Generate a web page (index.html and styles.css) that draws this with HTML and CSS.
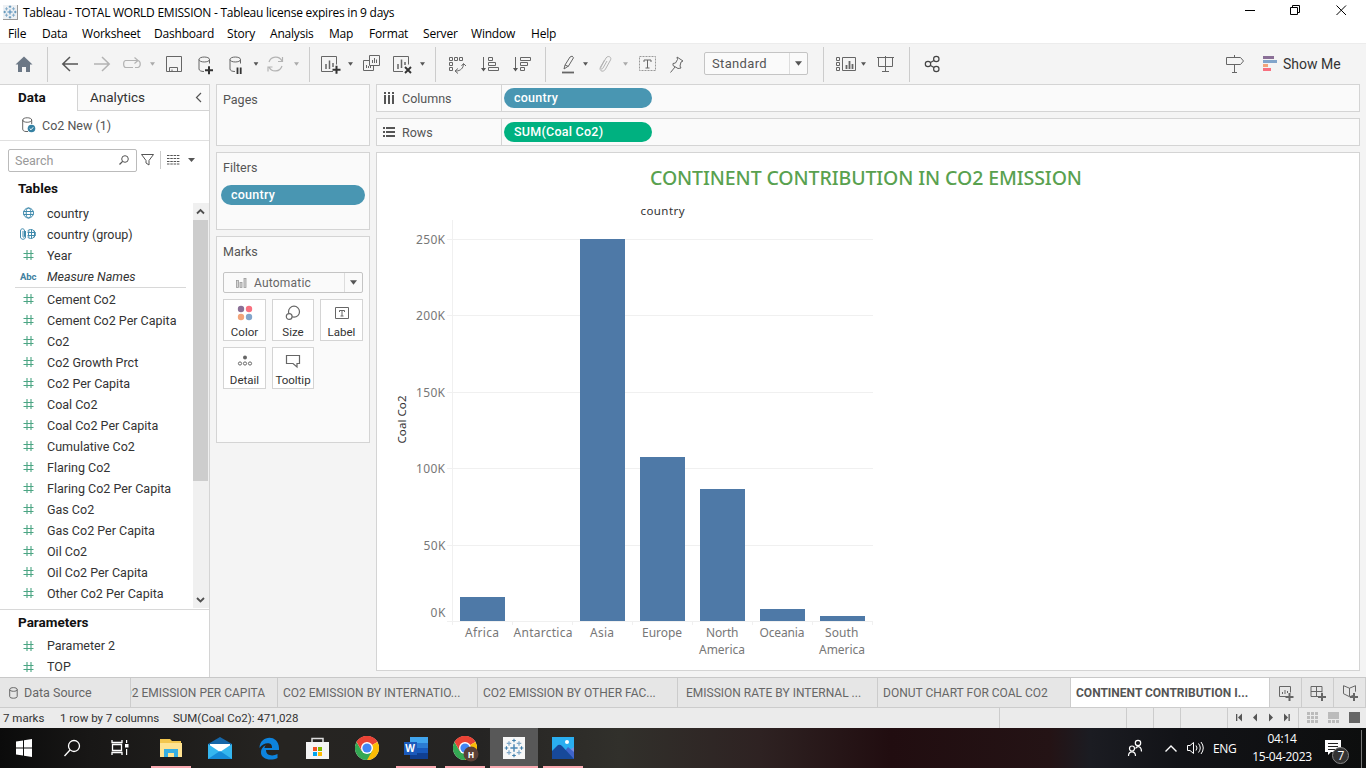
FILE: index.html
```html
<!DOCTYPE html>
<html lang="en">
<head>
<meta charset="utf-8">
<title>Tableau - TOTAL WORLD EMISSION</title>
<link rel="stylesheet" href="styles.css">
</head>
<body>
<svg class="defs" width="0" height="0" aria-hidden="true">
  <defs>
    <symbol id="hash" viewBox="0 0 12 12"><path d="M4.5 1v10M8.5 1v10M1 4.5h10M1 8.5h10" fill="none" stroke="#4ba583" stroke-width="1.1"/></symbol>
    <symbol id="spark" viewBox="0 0 22 22">
      <g fill="none" stroke-width="1.6">
        <path d="M11 7v8M7 11h8" stroke="#4b87b5" stroke-width="1.6"/>
        <path d="M11 .7v4M9 2.7h4M11 17.300v4M9 19.300h4M2.700 9v4M.7 11h4M19.300 9v4M17.300 11h4" stroke="#3f7fac" stroke-width="1.200"/>
        <path d="M5.500 3.500v5M3 6h5M16.500 3.500v5M14 6h5M5.500 13.500v5M3 16h5M16.500 13.500v5M14 16h5" stroke="#7fa8c8" stroke-width="1.400"/>
      </g>
    </symbol>
    <symbol id="cyl" viewBox="0 0 14 18"><path d="M1 3.500v9.500c0 1.500 2 2.500 5 2.500M11.500 3.500v4M1 3.500c0-3.300 10.500-3.300 10.500 0s-10.500 3.300-10.500 0z" fill="none" stroke="#666"/></symbol>
    <symbol id="caret" viewBox="0 0 6 4"><path d="M0 0h6L3 4z"/></symbol>
    <symbol id="chrome" viewBox="0 0 24 24">
      <circle cx="12" cy="12" r="12" fill="#fff"/>
      <path d="M12 12L1.600 6A12 12 0 0 1 22.400 6z" fill="#ea4335"/>
      <path d="M12 12L22.400 6A12 12 0 0 1 12 24z" fill="#fbbc05"/>
      <path d="M12 12v0L6.800 15 1.600 6A12 12 0 0 0 12 24l5.200-9z" fill="#34a853"/>
      <path d="M12 6h10.400A12 12 0 0 0 1.600 6l5.200 9z" fill="#ea4335"/>
      <circle cx="12" cy="12" r="6" fill="#fff"/><circle cx="12" cy="12" r="4.600" fill="#4285f4"/>
    </symbol>
  </defs>
</svg>

<header class="titlebar">
  <span class="app-icon"><svg width="14" height="14"><use href="#spark"/></svg></span>
  <span class="app-title">Tableau - TOTAL WORLD EMISSION - Tableau license expires in 9 days</span>
  <svg class="window-buttons" width="121" height="24" viewBox="1240 0 121 24" fill="none" stroke="#000"><path d="M1245 10.500h10M1290.500 7.500h7v7h-7zM1292.500 7v-1.500h7v7h-2M1336.500 5.500l9.500 9.500M1346 5.500l-9.500 9.500"/></svg>
</header>

<nav class="menu">
  <span>File</span><span>Data</span><span>Worksheet</span><span>Dashboard</span><span>Story</span><span>Analysis</span><span>Map</span><span>Format</span><span>Server</span><span>Window</span><span>Help</span>
</nav>

<div class="toolbar">
  <svg width="48" height="41" viewBox="0 43 48 41"><path d="M24 56.500l8.500 8h-2.500v7.500h-4v-5h-4v5h-4v-7.500h-2.500z" fill="#6b7785"/><path d="M47.500 47v35" stroke="#ccc"/></svg>
  <svg width="110" height="41" viewBox="48 43 110 41" fill="none" stroke="#555" stroke-width="1.500"><path d="M62.500 64h15.500M70 57l-7.200 7 7.200 7"/><g stroke="#b3b3b3"><path d="M94 64h15.500M102 57l7.200 7-7.200 7"/><path d="M133 67.500h-7.500c-2.500-.5-2.500-6.500 0-7h12M134.500 57.500l3.500 3-3.500 3M138 60.500c3 1 3 6 0 7h-3" stroke-width="1.200"/></g><use href="#caret" x="150" y="62" width="5" height="4" fill="#aaa" stroke="none"/></svg>
  <svg width="104" height="41" viewBox="158 43 104 41" fill="none" stroke="#666"><path d="M166.500 56.500h15v15h-15zM169.500 71.500v-4h8v4M172 71.500v-2"/><use href="#cyl" x="198" y="56" width="14" height="18"/><path d="M205 70.200h8M209 66.200v8" stroke="#333" stroke-width="2"/><use href="#cyl" x="229" y="56" width="14" height="18"/><path d="M237.500 67.500v6.500M240.700 67.500v6.500" stroke="#333" stroke-width="1.800"/><use href="#caret" x="253.500" y="62" width="5" height="4" fill="#555" stroke="none"/></svg>
  <svg width="48" height="41" viewBox="262 43 48 41" fill="none" stroke="#b3b3b3" stroke-width="1.200"><path d="M269 62a7 7 0 0 1 13-1M282 66a7 7 0 0 1-13 1M282.500 57v4.500h-4.500M268 71.500V67h4.500"/><use href="#caret" x="294" y="62" width="5" height="4" fill="#aaa" stroke="none"/><path d="M309.500 47v35" stroke="#ccc" stroke-width="1"/></svg>
  <svg width="126" height="41" viewBox="310 43 126 41" fill="none" stroke="#666"><path d="M333 71.500h-11.500v-15h15v8M388.500 47" /><path d="M326 69v-5M329.500 69v-8.500M333 67v-4" stroke-width="1.500"/><path d="M332.500 69.800h8M336.500 65.800v8" stroke="#333" stroke-width="2"/><use href="#caret" x="348" y="62" width="5" height="4" fill="#555" stroke="none"/><path d="M369.500 55.500h10v10h-10zM369 60.500h-5.500v10h10v-5M372.500 63v-3M374.500 63v-5M376.500 63v-3.500M366.500 68v-3M368.500 68v-2M370.500 68v-2"/><path d="M403 71.500h-9.500v-15h15v8"/><path d="M398 69v-5M401.500 68v-8.500M405 65v-3" stroke-width="1.500"/><path d="M405 67l6 6M411 67l-6 6" stroke="#333" stroke-width="1.900"/><use href="#caret" x="420" y="62" width="5" height="4" fill="#555" stroke="none"/><path d="M435.500 47v35" stroke="#ccc"/></svg>
  <svg width="110" height="41" viewBox="436 43 110 41" fill="none" stroke="#666"><path d="M449.500 57.500h3v3h-3zM454.500 57.500h3v3h-3zM459.500 57.500h3v3h-3zM449.500 62.500h3v3h-3zM449.500 67.500h3v3h-3z"/><path d="M463.500 64c0 4-3 7-7.500 7M461.500 66l2-2.500 2.500 2.500M458 68.500l-3 2.500 3 2.500"/><path d="M483.500 57v12.500M488.500 57.500h4v3h-4zM488.500 62.500h7v3h-7zM488.500 67.500h10v3h-10zM515.500 57v12.500M520.500 57.500h10v3h-10zM520.500 62.500h7v3h-7zM520.500 67.500h4v3h-4z"/><path d="M481 68h5l-2.500 3.500zM513 68h5l-2.500 3.500z" fill="#555" stroke="none"/><path d="M545.500 47v35" stroke="#ccc"/></svg>
  <svg width="156" height="41" viewBox="546 43 156 41" fill="none" stroke="#666"><path d="M564 69l1-4 5-8q2.500-2.200 3.500.8L568.500 66zM565 65l3.500 1.500"/><path d="M562 72.500h12" stroke-width="1.800"/><use href="#caret" x="583" y="62" width="5" height="4" fill="#555" stroke="none"/><path d="M607 61l-4 7c-1 2-3 1-2-1l5-9c2-3 6-1 4.500 2l-5 9c-2 4-7 2-5-2l4-7" stroke="#b3b3b3"/><use href="#caret" x="623" y="62" width="5" height="4" fill="#aaa" stroke="none"/><path d="M639.500 56.500h16v14h-16z" stroke="#999" stroke-dasharray="2 1"/><path d="M644 62v-2h7v2M647.500 60v8M645.500 68h4"/><path d="M677 57l6 4-2 1-1 4 1 2-3 .5-5-3 0-2 2.500-.5 2-3.500zM675 67l-4.500 5.500"/></svg>
  <div class="fit"><span>Standard</span><i><svg width="7" height="5"><use href="#caret" fill="#555"/></svg></i></div>
  <svg width="146" height="41" viewBox="808 43 146 41" fill="none" stroke="#666"><path d="M823.500 47v35M909.500 47v35" stroke="#ccc"/><path d="M836.500 57.500h3v3h-3zM836.500 62.500h3v3h-3zM836.500 67.500h3v3h-3zM842.500 57.500h13v13h-13z"/><path d="M846.500 69v-4M849.500 69v-8M852.500 69v-5" stroke-width="1.800"/><use href="#caret" x="861" y="62" width="5" height="4" fill="#555" stroke="none"/><path d="M877 57.500h17M878.500 57.500v9h14v-9M885.500 56v15.500M882 71.500h7"/><g stroke="#444" stroke-width="1.200"><circle cx="928" cy="64" r="2.700"/><circle cx="936.300" cy="59" r="2.700"/><circle cx="936.300" cy="69" r="2.700"/><path d="M930.500 62.500l3.500-2M930.500 65.500l3.500 2"/></g></svg>
  <svg class="guide" width="63" height="41" viewBox="1220 43 63 41" fill="none" stroke="#666"><path d="M1226.500 57.500h14l3 3.500-3 3.500h-14zM1234.500 55v2.500M1234.500 64.500v8M1232 72.500h5"/><g stroke="none"><path d="M1263 56h11v3h-11z" fill="#8a6f96"/><path d="M1263 60h14v3h-14z" fill="#82a5cb"/><path d="M1263 64h5v3h-5z" fill="#f2a47a"/><path d="M1263 68h8v3h-8z" fill="#f8707f"/></g></svg>
  <span class="showme">Show Me</span>
</div>

<div class="workspace">
  <aside class="sidebar">
    <div class="side-tabs"><b>Data</b><span>Analytics<svg width="7" height="11" viewBox="0 0 7 11"><path d="M6 1L1.500 5.500 6 10" fill="none" stroke="#555" stroke-width="1.200"/></svg></span></div>
    <div class="source"><svg width="14" height="16" viewBox="0 0 14 16"><path d="M6 14.500H4C2 14.500.7 13.500.7 12V3M9.700 3v4M.7 3c0-3 9-3 9 0s-9 3-9 0z" fill="none" stroke="#666"/><circle cx="9.500" cy="11.500" r="3.800" fill="#3581a3"/><path d="M7.700 11.500l1.300 1.300 2.200-2.500" fill="none" stroke="#fff"/></svg><span>Co2 New (1)</span></div>
    <div class="search-row">
      <div class="search"><span>Search</span><svg width="10" height="10" viewBox="0 0 10 10" fill="none" stroke="#555"><circle cx="6" cy="4" r="3.300"/><path d="M3.600 6.400L.5 9.500" stroke-width="1.300"/></svg></div>
      <svg width="72" height="23" viewBox="138 149 72 23" fill="none" stroke="#555"><path d="M142.500 154.500h12l-4.500 6v4.500l-3 -2v-2.500z"/><path d="M161.500 151v18" stroke="#ccc"/><path d="M168 155.500h12.500M168 158.500h12.500M168 161.500h12.500M168 164h12.500" stroke-dasharray="2.500 .8"/><path d="M189 158h7l-3.500 4z" fill="#555" stroke="none"/></svg>
    </div>
    <h2>Tables</h2>
    <div class="list-wrap">
      <ul class="fields">
        <li><svg width="12" height="12" viewBox="0 0 12 12" fill="none" stroke="#3f8aac"><circle cx="6" cy="6" r="5"/><ellipse cx="6" cy="6" rx="2.300" ry="5"/><path d="M1 4.500h10M1 7.500h10"/></svg><span>country</span></li>
        <li><svg width="17" height="12" viewBox="0 0 17 12" fill="none" stroke="#3f8aac"><path d="M3 3v5.500c0 1 1.500 1 1.500 0V3c0-3-4-3-4 0v6c0 3 5 3 5 0V3"/><path d="M7.500 3a4.500 4.500 0 1 1 0 6M11.500 1.500v9M9 2.500q-1.200 3.500 0 7M14 2.500q1.200 3.500 0 7M7.500 4.500h8M7.500 7.500h8"/></svg><span>country (group)</span></li>
        <li><svg width="12" height="12"><use href="#hash"/></svg><span>Year</span></li>
        <li class="last-dim"><b>Abc</b><em>Measure Names</em></li>
        <li><svg width="12" height="12"><use href="#hash"/></svg><span>Cement Co2</span></li>
        <li><svg width="12" height="12"><use href="#hash"/></svg><span>Cement Co2 Per Capita</span></li>
        <li><svg width="12" height="12"><use href="#hash"/></svg><span>Co2</span></li>
        <li><svg width="12" height="12"><use href="#hash"/></svg><span>Co2 Growth Prct</span></li>
        <li><svg width="12" height="12"><use href="#hash"/></svg><span>Co2 Per Capita</span></li>
        <li><svg width="12" height="12"><use href="#hash"/></svg><span>Coal Co2</span></li>
        <li><svg width="12" height="12"><use href="#hash"/></svg><span>Coal Co2 Per Capita</span></li>
        <li><svg width="12" height="12"><use href="#hash"/></svg><span>Cumulative Co2</span></li>
        <li><svg width="12" height="12"><use href="#hash"/></svg><span>Flaring Co2</span></li>
        <li><svg width="12" height="12"><use href="#hash"/></svg><span>Flaring Co2 Per Capita</span></li>
        <li><svg width="12" height="12"><use href="#hash"/></svg><span>Gas Co2</span></li>
        <li><svg width="12" height="12"><use href="#hash"/></svg><span>Gas Co2 Per Capita</span></li>
        <li><svg width="12" height="12"><use href="#hash"/></svg><span>Oil Co2</span></li>
        <li><svg width="12" height="12"><use href="#hash"/></svg><span>Oil Co2 Per Capita</span></li>
        <li><svg width="12" height="12"><use href="#hash"/></svg><span>Other Co2 Per Capita</span></li>
      </ul>
      <div class="scroll">
        <svg width="15" height="17" viewBox="0 0 15 17"><path d="M4 10.500l3.500-3.500 3.500 3.500" fill="none" stroke="#505050" stroke-width="1.800"/></svg>
        <div class="thumb"></div>
        <svg width="15" height="17" viewBox="0 0 15 17"><path d="M4 7l3.500 3.500L11 7" fill="none" stroke="#505050" stroke-width="1.800"/></svg>
      </div>
    </div>
    <div class="params">
      <h2>Parameters</h2>
      <ul class="fields">
        <li><svg width="12" height="12"><use href="#hash"/></svg><span>Parameter 2</span></li>
        <li><svg width="12" height="12"><use href="#hash"/></svg><span>TOP</span></li>
      </ul>
    </div>
  </aside>

  <section class="cards">
    <div class="card pages"><h3>Pages</h3></div>
    <div class="card filters"><h3>Filters</h3><div class="pill">country</div></div>
    <div class="card marks">
      <h3>Marks</h3>
      <div class="mark-type"><svg width="11" height="10" viewBox="0 0 11 10" fill="#d6d6d6" stroke="#999" stroke-width=".8"><rect x=".5" y="2.500" width="2" height="7"/><rect x="4" y="4.500" width="2" height="5"/><rect x="8" y=".5" width="2" height="9"/></svg><span>Automatic</span><i><svg width="7" height="5"><use href="#caret" fill="#555"/></svg></i></div>
      <div class="mark-grid">
        <div><svg width="16" height="16" viewBox="0 0 16 16"><circle cx="4" cy="4" r="3.200" fill="#8a6f96"/><circle cx="12" cy="4" r="3.200" fill="#f8707f"/><circle cx="4" cy="12" r="3.200" fill="#f2a47a"/><circle cx="12" cy="12" r="3.200" fill="#82a5cb"/></svg><span>Color</span></div>
        <div><svg width="16" height="16" viewBox="0 0 16 16" fill="none" stroke="#666" stroke-width="1.200"><circle cx="9" cy="6.700" r="5.500"/><circle cx="4.200" cy="11.500" r="2.900" fill="#fff"/></svg><span>Size</span></div>
        <div><svg width="16" height="16" viewBox="0 0 16 16" fill="none" stroke="#666"><path d="M1.500 2.500h13v11h-13zM5.500 7V5.500h5V7M8 5.500v5.500M6.500 11h3"/></svg><span>Label</span></div>
        <div><svg width="16" height="16" viewBox="0 0 16 16" fill="none" stroke="#666"><circle cx="8" cy="4.500" r="2" fill="#666" stroke="none"/><circle cx="3" cy="10.500" r="1.600"/><circle cx="8" cy="10.500" r="1.600"/><circle cx="13" cy="10.500" r="1.600"/></svg><span>Detail</span></div>
        <div><svg width="16" height="16" viewBox="0 0 16 16" fill="none" stroke="#666" stroke-width="1.200"><path d="M1.500 2.500h13v8h-2.500v3.500l-4-3.500H1.500z"/></svg><span>Tooltip</span></div>
      </div>
    </div>
  </section>

  <main class="view">
    <div class="shelf"><div class="shelf-name"><svg width="12" height="12" viewBox="0 0 12 12" fill="#555"><path d="M1 0h2v2H1zM5 0h2v2H5zM9 0h2v2H9zM1 3h2v9H1zM5 3h2v9H5zM9 3h2v9H9z"/></svg><span>Columns</span></div><div class="pill">country</div></div>
    <div class="shelf"><div class="shelf-name"><svg width="12" height="12" viewBox="0 0 12 12" fill="#555"><path d="M0 1h2v2H0zM0 5h2v2H0zM0 9h2v2H0zM3 1h9v2H3zM3 5h9v2H3zM3 9h9v2H3z"/></svg><span>Rows</span></div><div class="pill green">SUM(Coal Co2)</div></div>
    <div class="sheet">
      <svg class="chart" width="982" height="517" viewBox="377 153 982 517">
        <text class="sheet-title" x="650" y="184.500" textLength="432">CONTINENT CONTRIBUTION IN CO2 EMISSION</text>
        <text class="axis-title" x="640.500" y="215" textLength="44">country</text>
        <text class="axis-title" transform="translate(406 443.500) rotate(-90)" textLength="48">Coal Co2</text>
        <path class="grid" d="M447 239.500h426M447 315.500h426M447 392.500h426M447 468.500h426M447 545.500h426M447 621.500h426M452.500 220v405M512.500 622v3M572.500 622v3M632.500 622v3M692.500 622v3M752.500 622v3M812.500 622v3M872.500 622v3"/>
        <g class="bars"><path d="M460 597h45v24h-45zM580 239h45v382h-45zM640 457h45v164h-45zM700 489h45v132h-45zM760 609h45v12h-45zM820 616h45v5h-45z"/></g>
        <g class="ticks">
          <text x="416" y="244" textLength="29">250K</text><text x="416" y="320" textLength="29">200K</text><text x="416" y="397" textLength="29">150K</text><text x="416" y="473" textLength="29">100K</text><text x="423.500" y="550" textLength="22">50K</text><text x="430.500" y="617" textLength="15">0K</text>
          <text x="465" y="637" textLength="34">Africa</text><text x="513.500" y="637" textLength="59">Antarctica</text><text x="590" y="637" textLength="24">Asia</text><text x="642" y="637" textLength="40">Europe</text><text x="706" y="637" textLength="32.500">North</text><text x="699" y="654" textLength="46">America</text><text x="759.500" y="637" textLength="45">Oceania</text><text x="825" y="637" textLength="33.500">South</text><text x="819" y="654" textLength="46">America</text>
        </g>
      </svg>
    </div>
  </main>
</div>

<div class="tabs">
  <div class="tab t-source"><svg width="9" height="12" viewBox="0 0 9 12" fill="none" stroke="#666"><path d="M.7 2.500v7c0 2.300 7.500 2.300 7.500 0v-7M.7 2.500c0-2.500 7.500-2.500 7.500 0s-7.500 2.300-7.500 0z"/></svg><span>Data Source</span></div>
  <div class="tab t-first"><span>CO2 EMISSION PER CAPITA</span></div>
  <div class="tab t-mid"><span>CO2 EMISSION BY INTERNATIO...</span></div>
  <div class="tab t-mid"><span>CO2 EMISSION BY OTHER FAC...</span></div>
  <div class="tab t-mid t-rate"><span>EMISSION RATE BY INTERNAL ...</span></div>
  <div class="tab t-donut"><span>DONUT CHART FOR COAL CO2</span></div>
  <div class="tab t-active"><span>CONTINENT CONTRIBUTION I...</span></div>
  <svg width="96" height="29" viewBox="1270 678 96 29" fill="none" stroke="#666"><path d="M1301.500 678v29M1333.500 678v29M1365.500 678v29" stroke="#ccc"/><path d="M1288 696.500h-8.500v-10h11v6M1282.500 694v-2M1285 694v-4M1287.500 693v-2M1320 696.500h-9v-10h11v6M1316.500 686.500v10M1311 691.500h11M1353 695.500l-3.500 1.200-6-3v-8l6 2.500 6-2.500v6M1349.500 688v8.500"/><path d="M1285.500 697h8M1289.500 693v8M1318 697h8M1322 693v8M1350 697h8M1354 693v8" stroke-width="2"/></svg>
</div>

<footer class="status">
  <span class="s-marks">7 marks</span><span class="s-rows">1 row by 7 columns</span><span class="s-sum">SUM(Coal Co2): 471,028</span>
  <svg width="376" height="20" viewBox="990 708 376 20" fill="#555"><path d="M999.500 708v20M1126.500 708v20M1153.500 708v20M1180.500 708v20M1227.500 708v20M1298.500 708v20" stroke="#ccc"/><path d="M1236 714h1.300v7H1236zM1242 713.500v8l-4-4zM1257 713.500v8l-4-4zM1269 713.500v8l4-4zM1284 713.500v8l4-4zM1288.500 714h1.300v7h-1.300z"/><path d="M1307 712h3v3h-3zM1311 712h3v3h-3zM1315 712h3v3h-3zM1307 716h3v3h-3zM1311 716h3v3h-3zM1315 716h3v3h-3zM1307 720h3v3h-3zM1311 720h3v3h-3zM1315 720h3v3h-3zM1328 712h11v7h-11zM1328 720h3v3h-3zM1332 720h3v3h-3zM1336 720h3v3h-3z" fill="#bbb"/><path d="M1349 712h11v11h-11z" fill="#666"/></svg>
</footer>

<div class="taskbar">
  <svg width="146" height="40" viewBox="0 728 146 40"><path d="M16 741.500l7-1v7h-7zM24 740.300l8-1.300v8.500h-8zM16 748.500h7v7l-7-1zM24 748.500h8v8.500l-8-1.300z" fill="#fff"/><g fill="none" stroke="#fff" stroke-width="1.300"><circle cx="74" cy="746" r="5.500"/><path d="M70 750l-5.500 6"/><path d="M112 740v2.500h10V740M112 755v-2.500h10v2.500M112.500 744.500h9v6h-9z"/></g><path d="M126 740h1.200v3H126zM125 744h3.500v3.500H125zM126 749h1.200v6H126z" fill="#fff"/></svg>
  <svg width="196" height="40" viewBox="146 728 196 40"><path d="M160 739h10l2 2h9v16h-21z" fill="#f3c64e"/><path d="M160 743h22v14h-22z" fill="#ffe391"/><path d="M164 757v-8h14v8h-4v-4h-6v4z" fill="#36aee2"/><path d="M151 766h40v2h-40z" fill="#f9a9b0"/>
    <path d="M208 744l12-7 12 7v15h-24z" fill="#1566a8"/><path d="M210 744h20v9h-20z" fill="#fff"/><path d="M208 744l12 8 12-8v15h-24z" fill="#35b6ef"/><path d="M208 759l12-8 12 8z" fill="#168bd8"/>
    <path d="M259.500 748c0-13 19-14.500 19.500 0v2h-13c0 6 7 6.500 11.500 4v4c-7 3.500-17 1-16.500-6 .3-4 3-6 5-7-1.500 1.500-1.500 2.500-1.500 3h7.500c.5-7-9-5.500-12.500 0z" fill="#0d83dd"/>
    <path d="M312 744v-5.500h11v5.500" fill="none" stroke="#ddd" stroke-width="1.500"/><path d="M306 742h23v17h-23z" fill="#f4f4f4"/><path d="M313 747h4v4h-4z" fill="#f25022"/><path d="M318 747h4v4h-4z" fill="#7fba00"/><path d="M313 752h4v4h-4z" fill="#00a4ef"/><path d="M318 752h4v4h-4z" fill="#ffb900"/></svg>
  <svg width="258" height="40" viewBox="342 728 258 40"><use href="#chrome" x="355" y="736" width="24" height="24"/>
    <path d="M410 737h18v6h-18z" fill="#41a5ee"/><path d="M410 743h18v5h-18z" fill="#2b7cd3"/><path d="M410 748h18v5h-18z" fill="#185abd"/><path d="M410 753h18v6h-18z" fill="#103f91"/><path d="M404 742h13v13h-13z" fill="#1b5abc"/><text x="405.300" y="752" class="badge" textLength="10">W</text>
    <use href="#chrome" x="453" y="736" width="24" height="24"/><circle cx="471" cy="754" r="7.500" fill="#5c4038"/><text x="467.800" y="757.500" class="badge small">H</text>
    <path d="M490 728h48v40h-48z" fill="#585858"/><path d="M503 737h22v22h-22z" fill="#f7f7f7"/><use href="#spark" x="504" y="738" width="20" height="20"/>
    <path d="M552 737h22v22h-22z" fill="#2aaef0"/><path d="M574 747l-6 4 6 8z" fill="#7a8fe0"/><path d="M560 757l8-10 6 5v7h-14z" fill="#3f64c9"/><path d="M552 751l6-6q2-1 4 1l12 13h-22z" fill="#17499a"/><circle cx="567" cy="742" r="2" fill="#fff"/>
    <path d="M396 766h40v2h-40zM445 766h40v2h-40zM490 766h48v2h-48zM543 766h40v2h-40z" fill="#f9a9b0"/></svg>
  <svg class="tray" width="90" height="40" viewBox="1120 728 90 40" fill="none" stroke="#fff" stroke-width="1.200"><circle cx="1132" cy="748.500" r="2.500"/><path d="M1128.500 756c0-5.500 7-5.500 7 0"/><circle cx="1138" cy="743" r="2.700"/><path d="M1135.500 748.500c2-3.500 6-2 6 3"/><path d="M1165.500 751.500l5.500-5.500 5.500 5.500" stroke-width="1.400"/><path d="M1187.500 745.500h2.500l3.500-3v11l-3.500-3h-2.500zM1196 745.500q2 2.500 0 5M1198.500 743.500q3.500 4.500 0 9M1201 742q4.500 6 0 12" stroke-width="1"/></svg>
  <span class="lang">ENG</span>
  <div class="clock"><span>04:14</span><span>15-04-2023</span></div>
  <svg width="48" height="40" viewBox="1318 728 48 40"><path d="M1325 740h16v12h-10l-3 3v-3h-3z" fill="#fff"/><path d="M1328 743.500h10M1328 746.500h10M1328 749.500h7" stroke="#222"/><circle cx="1340.500" cy="755.500" r="8" fill="#333" stroke="#888"/><text x="1337.500" y="760" class="badge count">7</text><path d="M1361.500 730v38" stroke="#777"/></svg>
</div>
</body>
</html>
```
FILE: styles.css
```css
* { box-sizing: border-box; }
body { margin: 0; width: 1366px; height: 768px; overflow: hidden; background: #f4f4f4; font-family: Roboto, "Liberation Sans", sans-serif; font-size: 12.5px; color: #333; display: flex; flex-direction: column; white-space: nowrap; }
.defs { position: absolute; }
svg { display: block; flex: none; }
h2, h3, ul { margin: 0; padding: 0; font-weight: 400; }
ul { list-style: none; }

.titlebar { height: 24px; background: #fff; display: flex; align-items: center; padding-left: 3px; font-family: "Open Sans", sans-serif; font-size: 12px; color: #000; }
.app-icon { width: 15px; height: 15px; background: #eef1f4; border-right: 1px solid #999; border-bottom: 1px solid #999; margin-right: 5px; }
.app-title { letter-spacing: -.25px; }
.window-buttons { margin-left: auto; margin-right: 5px; }

.menu { height: 19px; background: #fff; display: grid; grid-template-columns: 34px 40px 72px 73px 43px 59px 40px 54px 48px 60px 60px; padding-left: 8px; align-items: center; font-family: "Open Sans", sans-serif; font-size: 12px; letter-spacing: -.2px; color: #000; }

.toolbar { height: 41px; display: flex; align-items: center; border-top: 1px solid #ececec; }
.toolbar > svg { margin-top: -1px; }
.fit { width: 104px; height: 23px; margin: 0 0 1px; border: 1px solid #c4c4c4; border-radius: 2px; background: #fafafa; display: flex; align-items: center; justify-content: space-between; padding-left: 7px; font-size: 13px; letter-spacing: .35px; color: #555; margin-left: 2px; }
.fit i, .mark-type i { width: 18px; height: 100%; border-left: 1px solid #ddd; display: flex; align-items: center; justify-content: center; }
.guide { margin-left: auto; }
.showme { width: 83px; font-size: 14px; color: #333; }

.workspace { height: 593px; display: flex; }
.sidebar { width: 210px; background: #fff; border-right: 1px solid #d4d4d4; display: flex; flex-direction: column; }
.side-tabs { height: 27px; display: flex; font-size: 14px; border-top: 1px solid #d4d4d4; }
.side-tabs b { width: 77px; padding: 4px 0 0 18px; color: #111; font-weight: 700; font-size: 13.500px; }
.side-tabs span { flex: 1; border-left: 1px solid #d4d4d4; border-bottom: 1px solid #d4d4d4; background: #fafafa; padding: 0 7px 0 12px; display: flex; justify-content: space-between; align-items: center; font-size: 13.500px; }
.source { height: 30px; border-bottom: 1px solid #e0e0e0; display: flex; align-items: center; padding-left: 22px; gap: 6px; color: #555; }
.search-row { display: flex; padding: 8px 0 0 8px; height: 31px; }
.search { width: 130px; height: 23px; border: 1px solid #bbb; border-radius: 2px; display: flex; align-items: center; justify-content: space-between; padding: 0 7px 0 6px; color: #999; }
h2 { height: 31px; line-height: 32px; padding-left: 18px; font-size: 13.500px; font-weight: 700; color: #111; }
.list-wrap { display: flex; height: 406px; justify-content: space-between; }
.fields { width: 193px; }
.fields li { height: 21px; display: flex; align-items: center; }
.fields li > :first-child { width: 17px; margin: 0 10px 0 20px; }
.fields li b { font-size: 9.500px; color: #3f7f9f; letter-spacing: -.1px; }
.fields .last-dim { height: 23px; padding-bottom: 2px; background: linear-gradient(#d8d8d8, #d8d8d8) 15px 21px / 171px 1px no-repeat; }
.scroll { width: 16px; background: #f0f0f0; display: flex; flex-direction: column; }
.scroll .thumb { height: 261px; width: 15px; background: #cdcdcd; margin-bottom: auto; }
.params { border-top: 1px solid #d8d8d8; flex: 1; margin-top: 1px; }
.params h2 { height: 25px; line-height: 24px; }

.cards { width: 154px; margin-left: 6px; display: flex; flex-direction: column; gap: 6px; }
.card { border: 1px solid #d4d4d4; background: #fafafa; }
h3 { font-size: 12.500px; color: #555; padding: 0 0 0 6px; height: 30px; line-height: 30px; }
.pages { height: 62px; }
.filters { height: 78px; }
.marks { height: 207px; }
.pill { height: 20px; border-radius: 10px; background: #4996b2; color: #fff; line-height: 20px; padding-left: 10px; font-weight: 500; letter-spacing: .25px; font-size: 12.500px; }
.filters .pill { margin: 2px 4px 0; }
.pill.green { background: #00b180; }
.mark-type { height: 21px; margin: 5px 6px 0; border: 1px solid #c4c4c4; border-radius: 2px; display: flex; align-items: center; padding-left: 12px; color: #666; gap: 7px; font-size: 12px; letter-spacing: .2px; }
.mark-type i { margin-left: auto; }
.mark-grid { display: grid; grid-template-columns: 43px 42px 43px; grid-auto-rows: 42px; gap: 6px; margin: 6px 6px 0; }
.mark-grid div { border: 1px solid #d4d4d4; background: #fff; display: flex; flex-direction: column; align-items: center; padding-top: 5px; font-size: 11.500px; gap: 4px; }

.view { width: 984px; margin-left: 6px; }
.shelf { height: 28px; border: 1px solid #d4d4d4; background: #fafafa; display: flex; align-items: center; margin-bottom: 6px; }
.shelf-name { width: 125px; height: 100%; border-right: 1px solid #d4d4d4; display: flex; align-items: center; padding-left: 6px; gap: 7px; color: #555; }
.shelf .pill { width: 148px; margin-left: 2px; }
.sheet { height: 519px; border: 1px solid #d4d4d4; background: #fff; }
.chart { font-family: "Noto Sans", sans-serif; }
.sheet-title { font-size: 19.500px; fill: #59a14f; font-weight: 500; }
.axis-title { font-size: 11.500px; fill: #333; }
.ticks { font-size: 12px; fill: #777; }
.grid { stroke: #f0f0f0; fill: none; }
.bars { fill: #4e79a7; }

.tabs { height: 31px; border-top: 1px solid #c8c8c8; border-bottom: 1px solid #ccc; background: #e6e6e6; display: flex; font-size: 12px; color: #666; }
.tab { border-right: 1px solid #ccc; display: flex; align-items: center; overflow: hidden; padding-left: 5px; }
.t-source { width: 131px; gap: 6px; padding-left: 9px; font-size: 12.500px; }
.t-first { width: 147px; justify-content: flex-end; padding-right: 12px; padding-left: 0; }
.t-mid { width: 200px; }
.t-rate { padding-left: 8px; }
.t-donut { width: 193px; }
.t-active { width: 199px; background: #fff; font-weight: 700; color: #555; }

.status { height: 20px; background: #ebebeb; display: flex; align-items: center; font-size: 11.500px; padding-left: 3px; }
.s-marks { width: 57px; }
.s-rows { width: 113px; }
.s-sum { flex: 1; }

.taskbar { height: 40px; display: flex; align-items: center; color: #fff; font-family: "Open Sans", sans-serif; font-size: 12px; background: linear-gradient(90deg, #0b0b0b, #181716 90px, #262421 280px, #252423 480px, #31302b 620px, #2e2222 760px, #210d10 890px, #241315 1050px, #1b1c22 1090px, #121317 1180px, #0d0e0e 1366px); }
.tray { margin-left: auto; }
.lang { width: 36px; padding-left: 3px; letter-spacing: -.3px; }
.clock { width: 72px; display: flex; flex-direction: column; align-items: center; line-height: 18px; letter-spacing: -.3px; }
.badge { font-family: "Open Sans", sans-serif; font-weight: 700; font-size: 10px; fill: #fff; }
.badge.small { font-size: 8.500px; }
.badge.count { font-size: 12px; font-weight: 400; }
```
